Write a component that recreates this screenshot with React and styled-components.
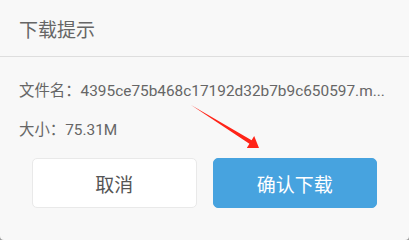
import styled, { createGlobalStyle } from 'styled-components'

const GlobalStyle = createGlobalStyle`
    html, body{
        margin: 0;
        padding: 0;
        background-color: #9a9a9a;
    }
    *{
        box-sizing: border-box;
    }
`

const DialogStyle = styled.div`
    width: 409px;
    height: 240px;
    position: relative;
    background-color: #f8f8f8;
    border-radius: 0 0 4px 4px;
    font-family: Roboto, "Noto Sans CJK SC", sans-serif;
    overflow: hidden;
`

const Header = styled.div`
    height: 57px;
    display: flex;
    align-items: center;
    padding-left: 19px;
    border-bottom: 1px solid #dedede;
    font-size: 19px;
    color: #666666;
`

const Body = styled.div`
    padding: 24px 19px 0;
    display: flex;
    flex-direction: column;
    gap: 19px;
`

const InfoLine = styled.div`
    height: 20px;
    line-height: 20px;
    font-size: 15.4px;
    color: #666666;
    white-space: nowrap;
    overflow: hidden;
    text-overflow: ellipsis;
`

const ButtonRow = styled.div`
    display: flex;
    gap: 16px;
    padding: 18px 32px 0;
`

const Button = styled.button`
    flex: 1;
    height: 50px;
    border-radius: 5px;
    font-family: inherit;
    font-size: 19px;
    border: 1px solid ${p => p.$primary ? '#47a3df' : '#e9e9e9'};
    background-color: ${p => p.$primary ? '#47a3df' : '#ffffff'};
    color: ${p => p.$primary ? '#ffffff' : '#555555'};
    cursor: pointer;
`

const ArrowOverlay = styled.svg`
    position: absolute;
    left: 0;
    top: 0;
    pointer-events: none;
`

function App(){
    return(
        <>
            <GlobalStyle/>
            <DialogStyle>
                <Header>下载提示</Header>
                <Body>
                    <InfoLine>文件名：4395ce75b468c17192d32b7b9c650597.m...</InfoLine>
                    <InfoLine>大小：75.31M</InfoLine>
                </Body>
                <ButtonRow>
                    <Button>取消</Button>
                    <Button $primary>确认下载</Button>
                </ButtonRow>
                <ArrowOverlay width="409" height="240" viewBox="0 0 409 240">
                    <polygon
                        points="191,105 251.6,140.3 254.2,136.1 259,148 246.8,147.9 249.4,143.7"
                        fill="#ff2418"
                    />
                </ArrowOverlay>
            </DialogStyle>
        </>
    )
}

export default App
